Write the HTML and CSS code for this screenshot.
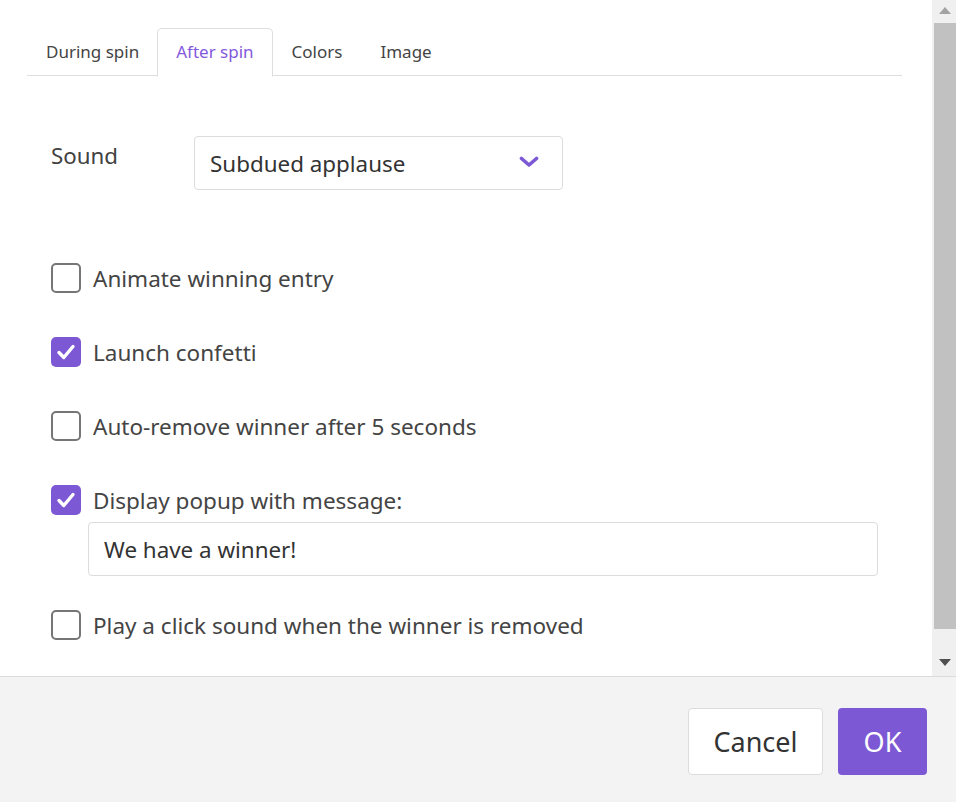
FILE: index.html
```html
<!DOCTYPE html>
<html>
<head>
<meta charset="utf-8">
<link rel="stylesheet" href="styles.css">
</head>
<body>
<div class="dialog">
  <div class="main">
    <div class="content">
      <div class="tabs">
        <div class="tab">During spin</div>
        <div class="tab active">After spin</div>
        <div class="tab">Colors</div>
        <div class="tab">Image</div>
      </div>
      <div class="panel">
        <div class="sound-row">
          <div class="sound-label">Sound</div>
          <div class="select">
            <span>Subdued applause</span>
            <svg class="chevron" width="20" height="12" viewBox="0 0 20 12"><polyline points="2.5,2.5 10,9 17.5,2.5" fill="none" stroke="#7d58d5" stroke-width="3.6" stroke-linecap="round" stroke-linejoin="round"/></svg>
          </div>
        </div>
        <div class="options">
          <div class="option"><span class="box"></span><span>Animate winning entry</span></div>
          <div class="option"><span class="box checked"><svg width="30" height="30" viewBox="0 0 30 30"><polyline points="8,15.5 12.8,20.5 22,9.5" fill="none" stroke="#fff" stroke-width="3.4" stroke-linecap="round" stroke-linejoin="round"/></svg></span><span>Launch confetti</span></div>
          <div class="option"><span class="box"></span><span>Auto-remove winner after 5 seconds</span></div>
          <div class="option-group">
            <div class="option"><span class="box checked"><svg width="30" height="30" viewBox="0 0 30 30"><polyline points="8,15.5 12.8,20.5 22,9.5" fill="none" stroke="#fff" stroke-width="3.4" stroke-linecap="round" stroke-linejoin="round"/></svg></span><span>Display popup with message:</span></div>
            <div class="text-input">We have a winner!</div>
          </div>
          <div class="option"><span class="box"></span><span>Play a click sound when the winner is removed</span></div>
        </div>
      </div>
    </div>
    <div class="scrollbar">
      <div class="sb-btn up"><span class="tri-up"></span></div>
      <div class="sb-track"><div class="sb-thumb"></div></div>
      <div class="sb-btn down"><span class="tri-down"></span></div>
    </div>
  </div>
  <div class="footer">
    <div class="btn cancel">Cancel</div>
    <div class="btn ok">OK</div>
  </div>
</div>
</body>
</html>
```
FILE: styles.css
```css
* { box-sizing: border-box; }
html, body { margin: 0; padding: 0; }
body {
  font-family: "Noto Sans", "Open Sans", sans-serif;
  color: #424242;
  background: #fff;
}
.dialog {
  width: 956px;
  height: 802px;
  display: flex;
  flex-direction: column;
}
.main {
  height: 676px;
  display: flex;
  flex-direction: row;
}
.content {
  flex: 1;
  padding: 28px 30px 0 27px;
}
.tabs {
  display: flex;
  border-bottom: 1px solid #dedede;
  height: 48px;
}
.tab {
  font-size: 17px;
  height: 48px;
  line-height: 46px;
  padding: 0 18px 0 18px;
  border: 1px solid transparent;
  border-radius: 5px 5px 0 0;
  color: #444;
}
.tab:first-child { padding-right: 17px; }
.tab.active {
  border-color: #dedede;
  border-bottom-color: #fff;
  background: #fff;
  color: #8459dc;
  height: 49px;
}
.panel {
  padding: 60px 0 0 24px;
}
.sound-row {
  display: flex;
  align-items: flex-start;
}
.sound-label {
  width: 143px;
  font-size: 22.3px;
  line-height: 30px;
  padding-top: 5px;
}
.select {
  width: 369px;
  height: 54px;
  border: 1px solid #dcdcdc;
  border-radius: 4px;
  display: flex;
  align-items: center;
  justify-content: space-between;
  padding: 0 23px 0 15px;
  font-size: 22.4px;
  color: #333;
}
.chevron { display: block; margin-top: -2px; }
.options {
  padding-top: 73px;
  display: flex;
  flex-direction: column;
  gap: 44px;
}
.option {
  display: flex;
  align-items: center;
  gap: 12px;
  height: 30px;
  font-size: 22.5px;
  color: #444;
}
.box {
  width: 30px;
  height: 30px;
  border: 2.5px solid #767676;
  border-radius: 5px;
  flex: none;
}
.box.checked {
  border: none;
  background: #7d58d5;
}
.box svg { display: block; }
.option-group {
  display: flex;
  flex-direction: column;
  margin-bottom: -10px;
}
.text-input {
  margin: 7px 0 0 37px;
  width: 790px;
  height: 54px;
  border: 1px solid #dcdcdc;
  border-radius: 4px;
  padding: 0 15px;
  display: flex;
  align-items: center;
  font-size: 22.4px;
  color: #333;
}
.scrollbar {
  width: 24px;
  background: #f0f0f0;
  display: flex;
  flex-direction: column;
}
.sb-btn {
  display: flex;
  justify-content: center;
}
.sb-btn.up {
  height: 23px;
  align-items: flex-start;
  padding-top: 7px;
}
.sb-btn.down {
  height: 47px;
  align-items: flex-start;
  padding-top: 30px;
}
.tri-up {
  width: 0; height: 0;
  border-left: 6px solid transparent;
  border-right: 6px solid transparent;
  border-bottom: 7px solid #a3a3a3;
  margin-left: 1px;
}
.tri-down {
  width: 0; height: 0;
  border-left: 6px solid transparent;
  border-right: 6px solid transparent;
  border-top: 7px solid #505050;
  margin-left: 1px;
}
.sb-track {
  flex: 1;
  padding-left: 2px;
}
.sb-thumb {
  height: 100%;
  background: #c1c1c1;
}
.footer {
  flex: 1;
  background: #f3f3f3;
  border-top: 1px solid #dcdcdc;
  display: flex;
  justify-content: flex-end;
  align-items: flex-start;
  padding: 31px 29px 0 0;
  gap: 15px;
}
.btn {
  height: 67px;
  border-radius: 4px;
  font-size: 27px;
  display: flex;
  align-items: center;
  justify-content: center;
}
.cancel {
  width: 135px;
  background: #fff;
  border: 1px solid #dcdcdc;
  color: #333;
}
.ok {
  width: 89px;
  background: #7d58d5;
  color: #fff;
}
```
